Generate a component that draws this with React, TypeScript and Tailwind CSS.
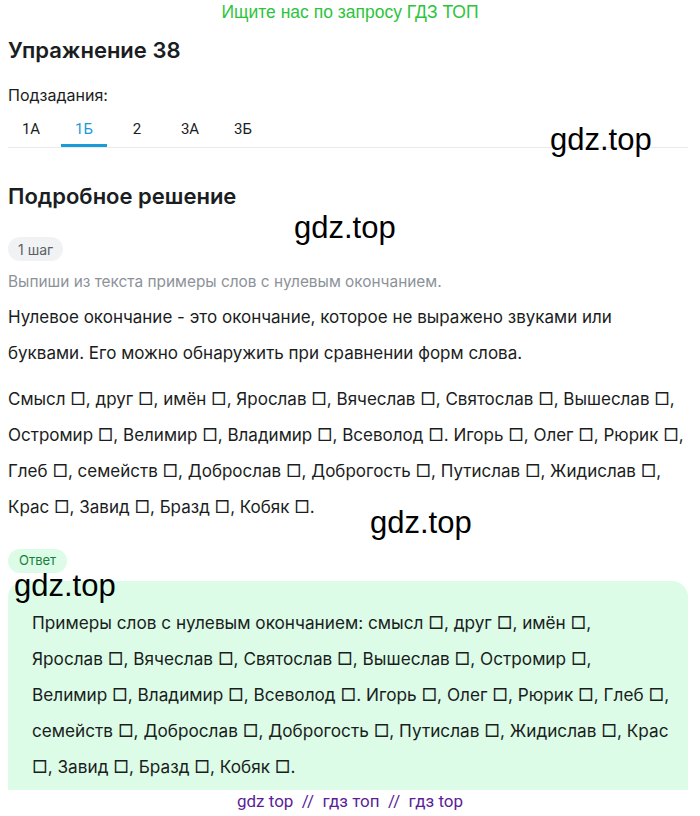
import React from "react";

const F = { fontFamily: "Inter, 'Noto Sans', sans-serif" } as React.CSSProperties;

function Mark({ className }: { className: string }) {
  return (
    <div
      className={"absolute text-[31px] leading-none text-black pointer-events-none " + className}
      style={{ fontFamily: "'Liberation Sans', Arial, sans-serif" }}
    >
      gdz.top
    </div>
  );
}

export default function App() {
  const tabs = ["1А", "1Б", "2", "3А", "3Б"];
  return (
    <div className="relative w-[700px] bg-white text-[#1a1d21]" style={F}>
      <div
        className="h-[24px] flex items-center justify-center text-[17.5px] text-[#2cc43b]"
        style={{ fontFamily: "'Liberation Sans', Arial, sans-serif" }}
      >
        Ищите нас по запросу ГДЗ ТОП
      </div>
      <div className="pl-2 pr-3">
        <h1 className="mt-[12px] text-[22px] font-semibold leading-[28px]">Упражнение 38</h1>
        <div className="mt-[20px] text-[16px] leading-[22px]">Подзадания:</div>
        <div className="mt-[5px] flex gap-[7px] border-b border-[#e8eaed]" style={{ fontFamily: "Roboto, sans-serif" }}>
          {tabs.map((t, i) => (
            <div
              key={t}
              className={
                "w-[46px] h-[36px] flex items-center justify-center text-[15px] " +
                (i === 1 ? "text-[#1a9ad6] border-b-[3px] border-[#1a9ad6] pt-[3px]" : "text-[#1a1d21]")
              }
            >
              {t}
            </div>
          ))}
        </div>
        <h2 className="mt-[34px] text-[22px] font-semibold leading-[28px]">Подробное решение</h2>
        <div className="mt-[27px] inline-flex h-[24px] items-center rounded-full bg-[#f1f2f4] px-[10px] text-[14px] text-[#5b5f66]">
          1 шаг
        </div>
        <div className="mt-[10px] text-[15.4px] leading-[22px] text-[#8d9299]">
          Выпиши из текста примеры слов с нулевым окончанием.
        </div>
        <p className="mt-[6px] text-[17px] leading-[36px]">
          Нулевое окончание - это окончание, которое не выражено звуками или буквами. Его можно обнаружить при
          сравнении форм слова.
        </p>
        <p className="mt-[10px] text-[17px] leading-[36px]">
          Смысл □, друг □, имён □, Ярослав □, Вячеслав □, Святослав □, Вышеслав □, Остромир □, Велимир □, Владимир □,
          Всеволод □. Игорь □, Олег □, Рюрик □, Глеб □, семейств □, Доброслав □, Доброгость □, Путислав □, Жидислав □,
          Крас □, Завид □, Бразд □, Кобяк □.
        </p>
        <div className="mt-[24px] inline-flex h-[24px] items-center rounded-full bg-[#dcfce7] px-[11px] text-[13px] text-[#15803d]">
          Ответ
        </div>
        <div className="mt-[8px] rounded-t-[16px] bg-[#dcfce7] pl-[24px] pr-[16px] pt-[24px] pb-[5px]">
          <p className="text-[17.2px] leading-[36px] whitespace-nowrap">
            Примеры слов с нулевым окончанием: смысл □, друг □, имён □,
            <br />
            Ярослав □, Вячеслав □, Святослав □, Вышеслав □, Остромир □,
            <br />
            Велимир □, Владимир □, Всеволод □. Игорь □, Олег □, Рюрик □, Глеб □,
            <br />
            семейств □, Доброслав □, Доброгость □, Путислав □, Жидислав □, Крас
            <br />
            □, Завид □, Бразд □, Кобяк □.
          </p>
        </div>
      </div>
      <div
        className="h-[24px] flex items-center justify-center text-[17px] text-[#5b1f99]"
        style={{ fontFamily: "Roboto, sans-serif" }}
      >
        gdz top&nbsp; //&nbsp; гдз топ&nbsp; //&nbsp; гдз top
      </div>
      <Mark className="left-[550px] top-[124px]" />
      <Mark className="left-[294px] top-[212px]" />
      <Mark className="left-[370px] top-[507px]" />
      <Mark className="left-[14px] top-[570px]" />
    </div>
  );
}
